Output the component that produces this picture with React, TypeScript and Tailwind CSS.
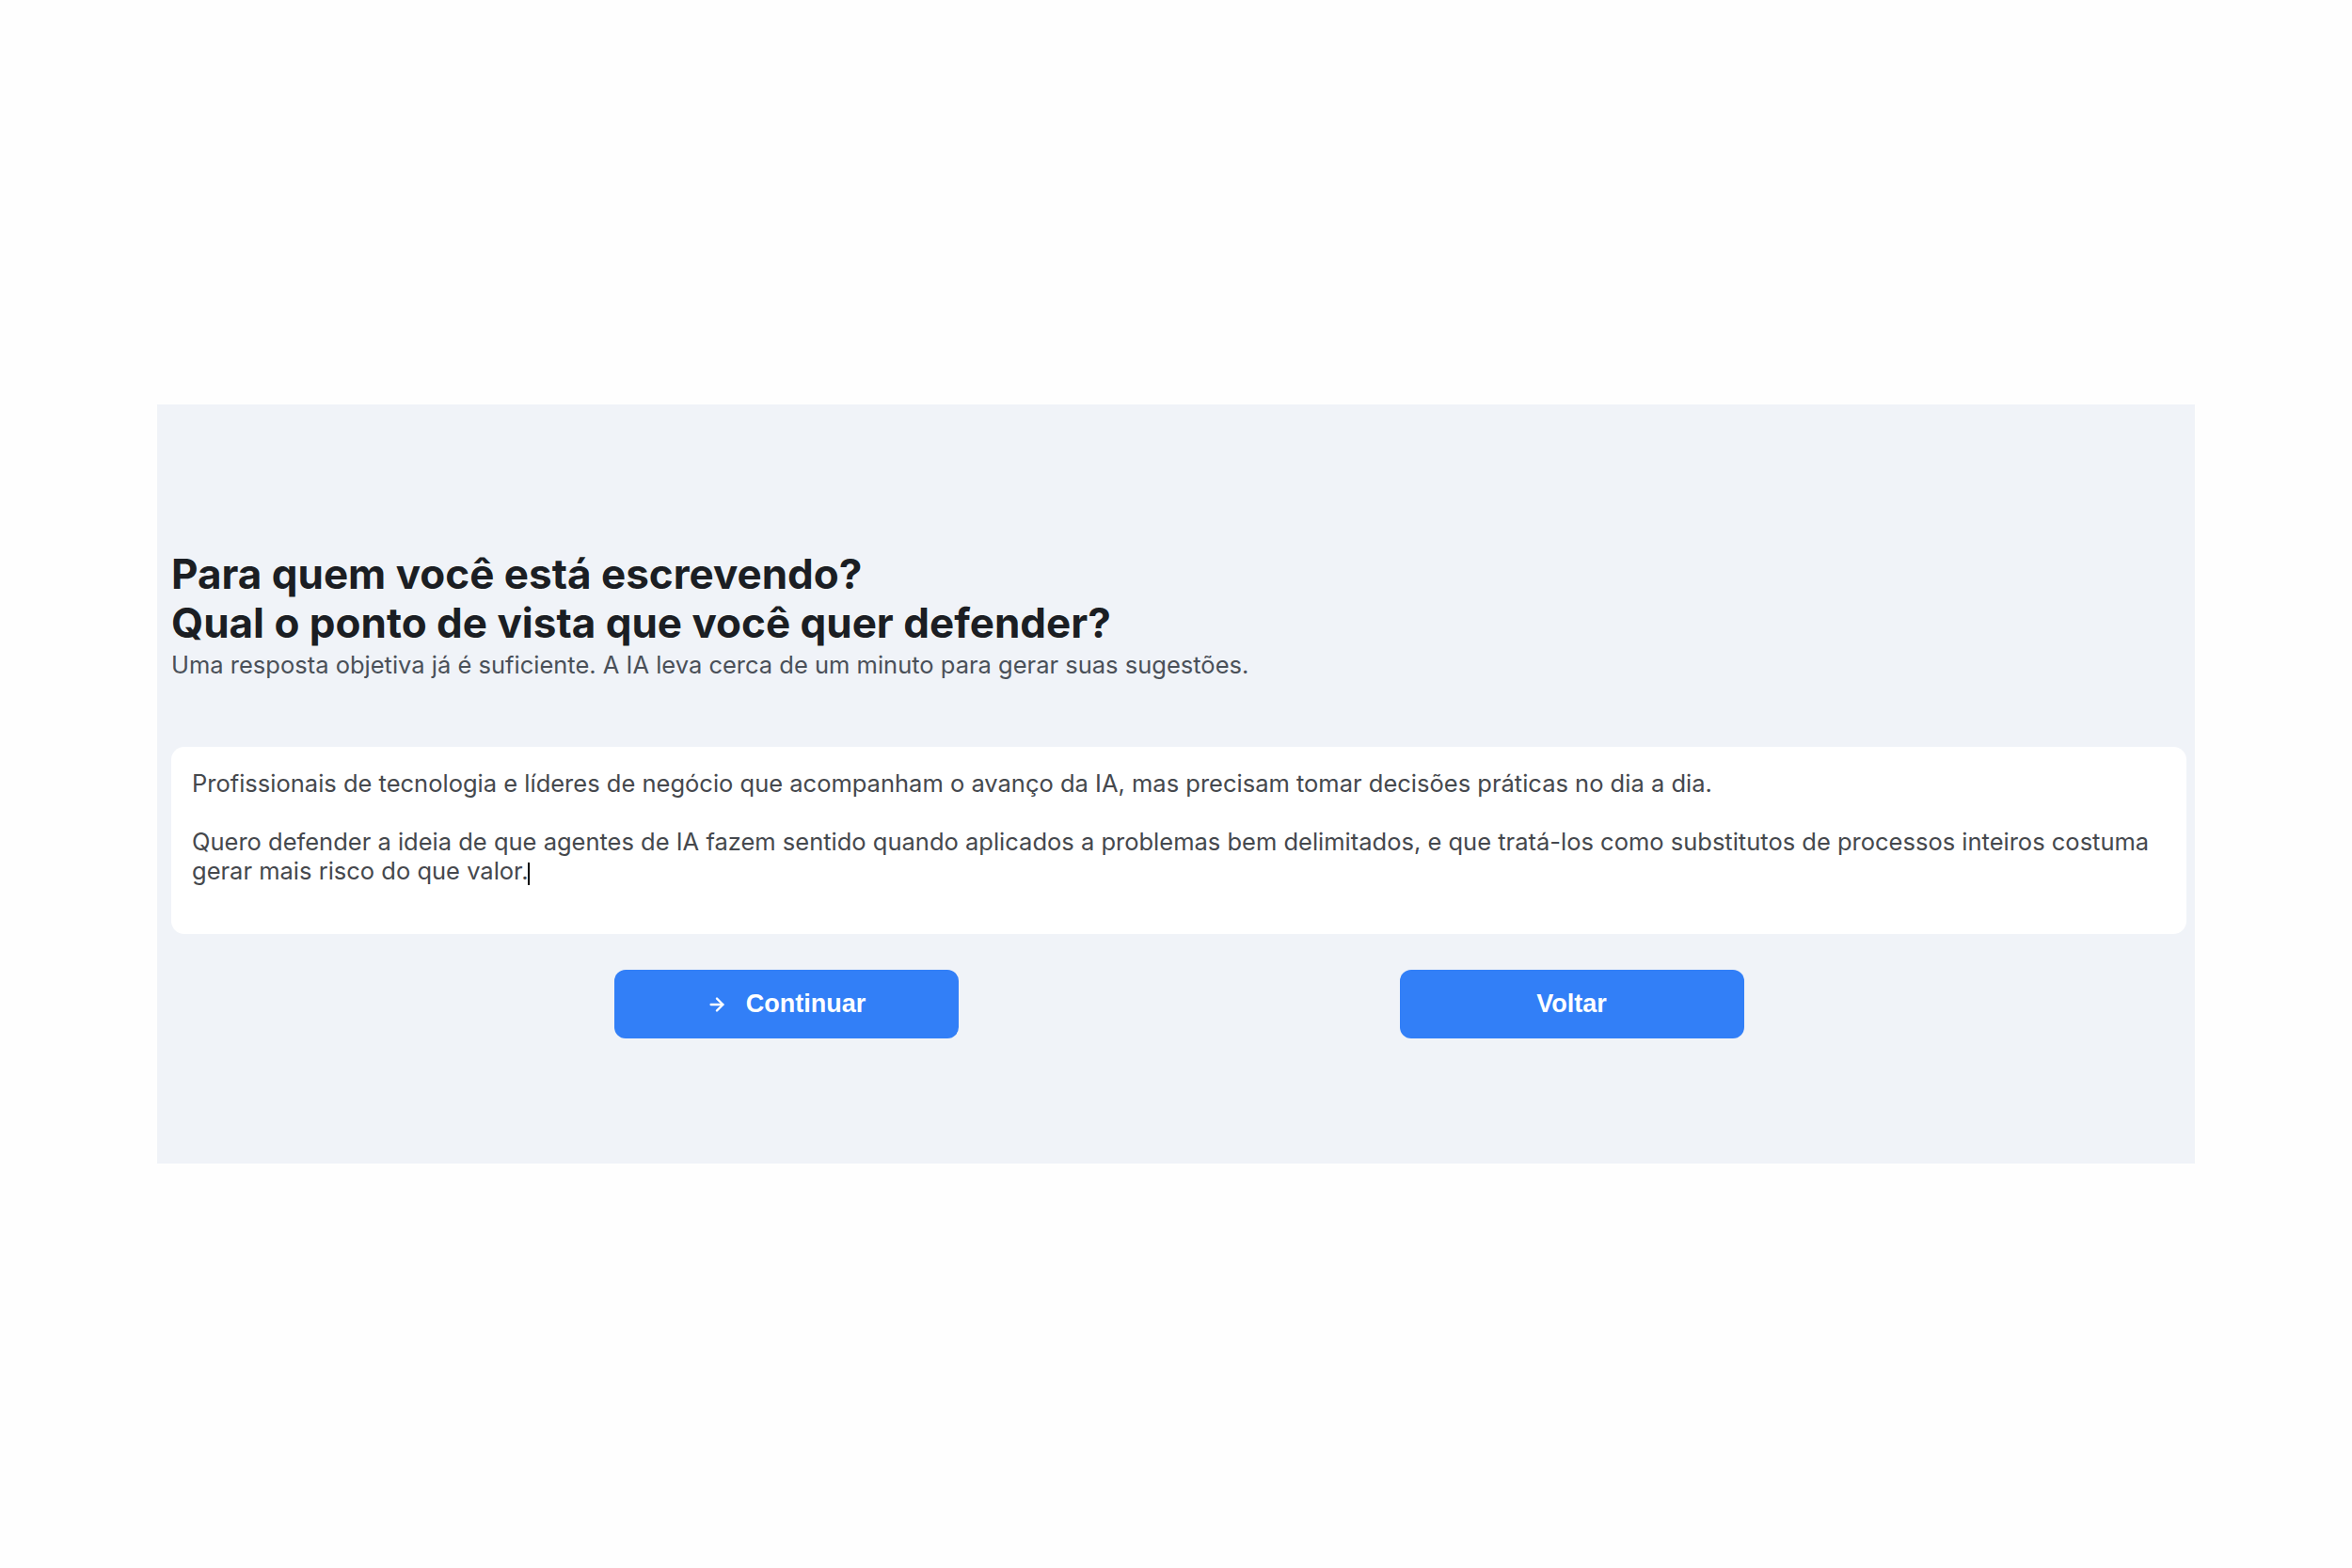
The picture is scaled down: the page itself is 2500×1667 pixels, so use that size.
import { ArrowRight } from 'lucide-react';

const inter = { fontFamily: 'Inter, "Noto Sans", sans-serif' };

function Caret() {
  return <span className="inline-block w-[2px] h-[24px] bg-black align-[-6px]"></span>;
}

export default function App() {
  return (
    <div className="w-full h-[1667px] bg-[#fefefe] flex items-center justify-center">
      <div className="w-[2166px] h-[807px] bg-[#f0f3f8] pt-[154px] pl-[15px] pr-[9px] flex flex-col" style={inter}>
        <h1 className="text-[44px] leading-[52px] font-bold text-[#1b1e23]">
          Para quem você está escrevendo?
          <br />
          Qual o ponto de vista que você quer defender?
        </h1>
        <p className="text-[25.5px] leading-[38px] text-[#4a5058]">
          Uma resposta objetiva já é suficiente. A IA leva cerca de um minuto para gerar suas sugestões.
        </p>

        <div className="mt-[68px] h-[199px] bg-white rounded-[14px] px-[22px] pt-[23px] text-[25.5px] leading-[31px] text-[#45484d] whitespace-pre-wrap">
          {'Profissionais de tecnologia e líderes de negócio que acompanham o avanço da IA, mas precisam tomar decisões práticas no dia a dia.\n\nQuero defender a ideia de que agentes de IA fazem sentido quando aplicados a problemas bem delimitados, e que tratá-los como substitutos de processos inteiros costuma gerar mais risco do que valor.'}
          <Caret />
        </div>

        <div className="mt-[38px] flex justify-center gap-[469px]">
          <button className="w-[366px] h-[73px] rounded-[12px] bg-[#327ff7] text-white flex items-center justify-center gap-[20px] font-['Liberation_Sans',Arial,sans-serif] font-bold text-[27px]">
            <ArrowRight className="w-[22px] h-[22px]" strokeWidth={2.5} />
            Continuar
          </button>
          <button className="w-[366px] h-[73px] rounded-[12px] bg-[#327ff7] text-white flex items-center justify-center font-['Liberation_Sans',Arial,sans-serif] font-bold text-[27px]">
            Voltar
          </button>
        </div>
      </div>
    </div>
  );
}
